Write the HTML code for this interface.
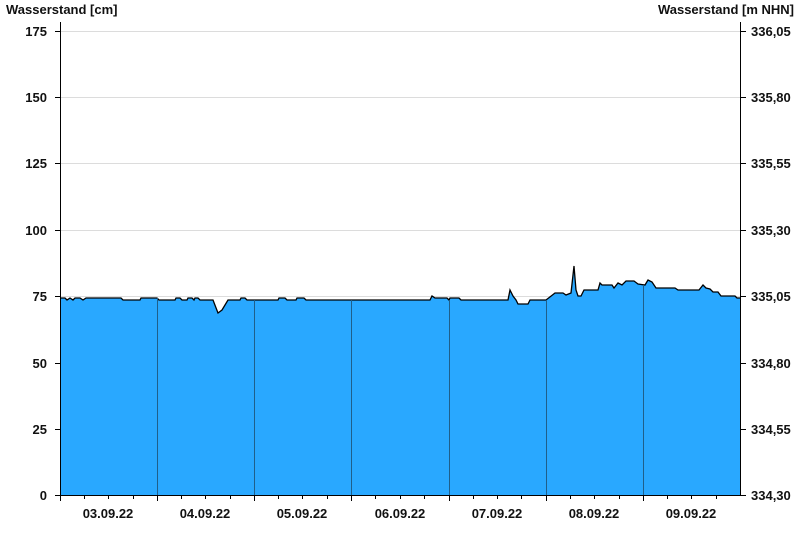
<!DOCTYPE html><html><head><style>body{margin:0;background:#fff}svg{display:block;font-family:"Liberation Sans",Arial,sans-serif;font-weight:bold;font-size:13px;fill:#111}</style></head><body>
<svg width="800" height="550" viewBox="0 0 800 550">
<text x="6" y="14">Wasserstand [cm]</text>
<text x="794" y="14" text-anchor="end">Wasserstand [m NHN]</text>
<g stroke="#dcdcdc" stroke-width="1">
<line x1="60" x2="740" y1="31.5" y2="31.5"/><line x1="60" x2="740" y1="97.5" y2="97.5"/><line x1="60" x2="740" y1="163.5" y2="163.5"/><line x1="60" x2="740" y1="230.5" y2="230.5"/><line x1="60" x2="740" y1="296.5" y2="296.5"/><line x1="60" x2="740" y1="363.5" y2="363.5"/><line x1="60" x2="740" y1="429.5" y2="429.5"/>
</g>
<polygon fill="#29a8ff" stroke="none" points="61,298 65,298 67,300 70,298 73,300 75,298 80,298 83,300 86,298 121,298 123,300 140,300 141,298 157,298 159,300 175,300 176,298 180,298 182,300 187,300 188,298 192,298 194,300 195,298 198,298 200,300 213,300 218,313 222,310 228,300 240,300 241,298 245,298 247,300 278,300 279,298 285,298 287,300 296,300 297,298 304,298 306,300 430,300 432,296 435,298 447,298 449,300 450,298 459,298 461,300 508,300 510,290 513,296 516,300 518,304 528,304 530,300 546,300 555,293 563,293 566,295 571,293 574,266 576,290 578,296 581,296 584,290 598,290 600,283 602,285 612,285 614,288 618,283 622,285 626,281 634,281 638,284 645,285 648,280 652,282 656,288 675,288 678,290 699,290 703,285 706,288 710,289 713,292 718,292 721,296 735,296 737,298 740,298 740,495 61,495"/>
<polyline fill="none" stroke="#000" stroke-width="1.3" points="61,298 65,298 67,300 70,298 73,300 75,298 80,298 83,300 86,298 121,298 123,300 140,300 141,298 157,298 159,300 175,300 176,298 180,298 182,300 187,300 188,298 192,298 194,300 195,298 198,298 200,300 213,300 218,313 222,310 228,300 240,300 241,298 245,298 247,300 278,300 279,298 285,298 287,300 296,300 297,298 304,298 306,300 430,300 432,296 435,298 447,298 449,300 450,298 459,298 461,300 508,300 510,290 513,296 516,300 518,304 528,304 530,300 546,300 555,293 563,293 566,295 571,293 574,266 576,290 578,296 581,296 584,290 598,290 600,283 602,285 612,285 614,288 618,283 622,285 626,281 634,281 638,284 645,285 648,280 652,282 656,288 675,288 678,290 699,290 703,285 706,288 710,289 713,292 718,292 721,296 735,296 737,298 740,298"/>
<g stroke="#1f5f8a" stroke-width="1">
<line x1="157.5" x2="157.5" y1="298" y2="495"/><line x1="254.5" x2="254.5" y1="300" y2="495"/><line x1="351.5" x2="351.5" y1="300" y2="495"/><line x1="449.5" x2="449.5" y1="300" y2="495"/><line x1="546.5" x2="546.5" y1="300" y2="495"/><line x1="643.5" x2="643.5" y1="285" y2="495"/>
</g>
<g stroke="#000" stroke-width="1">
<line x1="60.5" x2="60.5" y1="22" y2="501"/><line x1="740.5" x2="740.5" y1="22" y2="495"/><line x1="55" x2="740" y1="495.5" y2="495.5"/>
<line x1="55" x2="60" y1="31.5" y2="31.5"/><line x1="55" x2="60" y1="97.5" y2="97.5"/><line x1="55" x2="60" y1="163.5" y2="163.5"/><line x1="55" x2="60" y1="230.5" y2="230.5"/><line x1="55" x2="60" y1="296.5" y2="296.5"/><line x1="55" x2="60" y1="363.5" y2="363.5"/><line x1="55" x2="60" y1="429.5" y2="429.5"/>
<line x1="740" x2="746" y1="31.5" y2="31.5"/><line x1="740" x2="746" y1="97.5" y2="97.5"/><line x1="740" x2="746" y1="163.5" y2="163.5"/><line x1="740" x2="746" y1="230.5" y2="230.5"/><line x1="740" x2="746" y1="296.5" y2="296.5"/><line x1="740" x2="746" y1="363.5" y2="363.5"/><line x1="740" x2="746" y1="429.5" y2="429.5"/><line x1="740" x2="746" y1="495.5" y2="495.5"/>
<line x1="157.5" x2="157.5" y1="495" y2="501"/><line x1="254.5" x2="254.5" y1="495" y2="501"/><line x1="351.5" x2="351.5" y1="495" y2="501"/><line x1="449.5" x2="449.5" y1="495" y2="501"/><line x1="546.5" x2="546.5" y1="495" y2="501"/><line x1="643.5" x2="643.5" y1="495" y2="501"/>
<path d="M84.5 495v4M108.5 495v4M133.5 495v4M181.5 495v4M205.5 495v4M230.5 495v4M278.5 495v4M302.5 495v4M327.5 495v4M375.5 495v4M400.5 495v4M424.5 495v4M473.5 495v4M497.5 495v4M521.5 495v4M570.5 495v4M594.5 495v4M619.5 495v4M667.5 495v4M691.5 495v4M716.5 495v4"/>
</g>
<g text-anchor="end"><text x="47" y="36">175</text><text x="47" y="102">150</text><text x="47" y="168">125</text><text x="47" y="235">100</text><text x="47" y="301">75</text><text x="47" y="368">50</text><text x="47" y="434">25</text><text x="47" y="500">0</text></g>
<g><text x="751" y="36">336,05</text><text x="751" y="102">335,80</text><text x="751" y="168">335,55</text><text x="751" y="235">335,30</text><text x="751" y="301">335,05</text><text x="751" y="368">334,80</text><text x="751" y="434">334,55</text><text x="751" y="500">334,30</text></g>
<g text-anchor="middle"><text x="108" y="518">03.09.22</text><text x="205" y="518">04.09.22</text><text x="302" y="518">05.09.22</text><text x="400" y="518">06.09.22</text><text x="497" y="518">07.09.22</text><text x="594" y="518">08.09.22</text><text x="691" y="518">09.09.22</text></g>
</svg></body></html>
